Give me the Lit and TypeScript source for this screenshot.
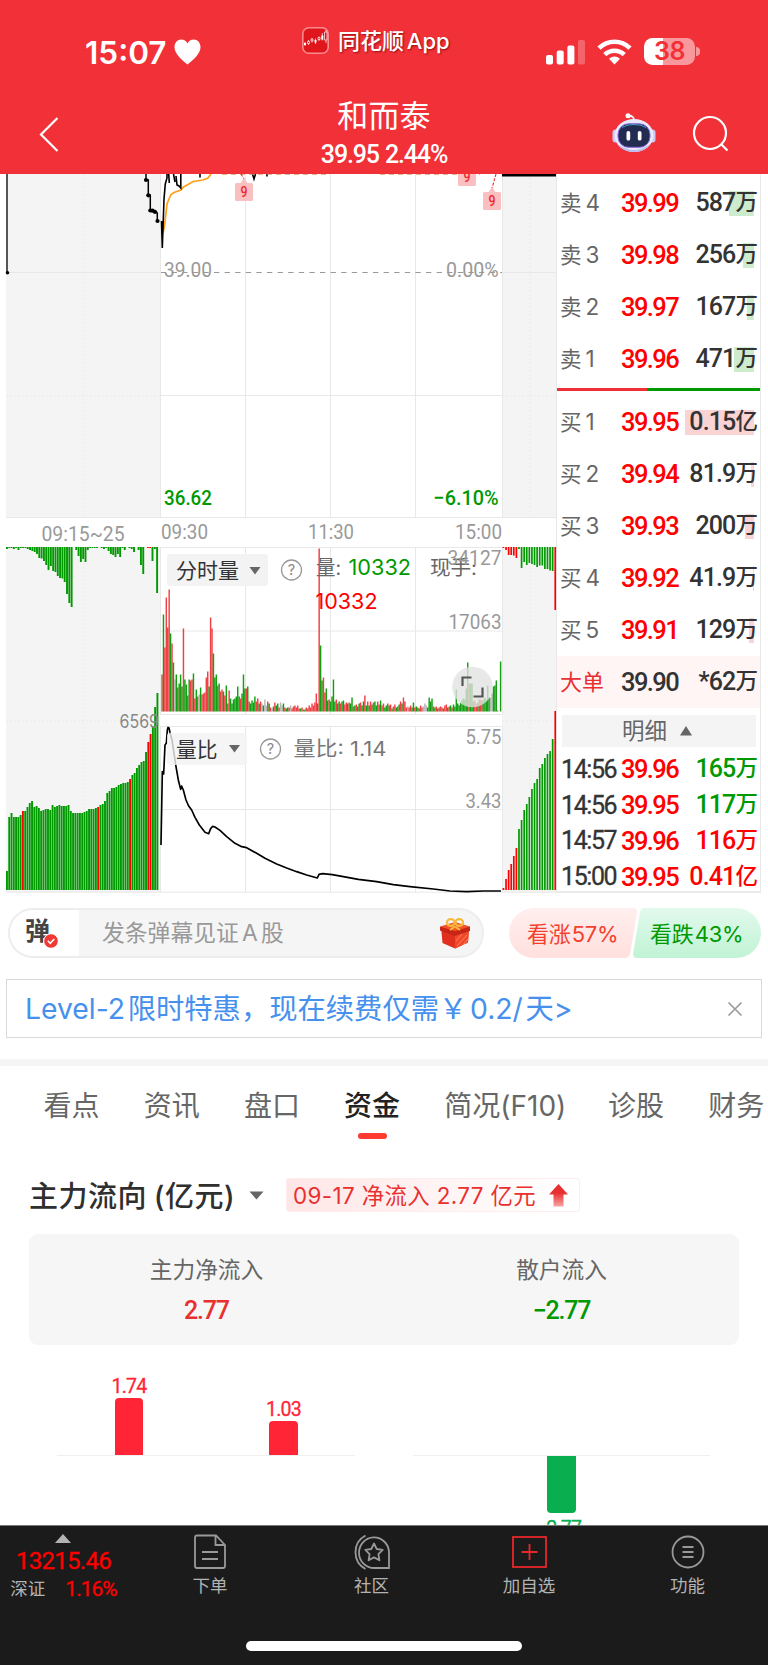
import { LitElement, html, svg, css } from "lit";
import { customElement } from "lit/decorators.js";

const GREEN = "#009900";
const RED = "#ff0000";

/* Bars are written as height plus an optional colour letter: r red, x grey, none green. */
function bars(src: string, x0: number, pitch: number, w: number, base: number, up: boolean, red = RED, op = 1) {
  return src.trim().split(/\s+/).map((t, i) => {
    const h = parseFloat(t);
    const fill = t.endsWith("r") ? red : t.endsWith("x") ? "#b0b0b0" : GREEN;
    return svg`<rect x=${x0 + i * pitch} y=${up ? base - h : base} width=${w} height=${h} fill=${fill} opacity=${op}></rect>`;
  });
}

const AUCTION_TOP = `2 1 1 2 1 3 1 1 1 2 3 4 5 7 11 11.5 14 18 23 19 24 25 29 31 31.5 35 47 56 60 0 3 9 15 12 15 3 1 1 1 1 0 1 2 1 4 7 8 10 7 10 1 3 0 1 2 5 0 3 18 27 0 1r 1r 14 2 46`;
const AUCTION_LOW = `19 73 77 73 73 73 75 79r 79 83 87 89 83 84 82 79 80 81 81 80 85 83 84 85 84 84 84 85 79 77 77 77 77 77 78 79 81 81 81 82 83r 85 86 89 97 99 102 102 103 105 106 107 107 108 111r 115 117 122 125 128 129 138 148r 156r 164 183 197`;
const CLOSE_TOP = `1r 3r 8r 8r 8.5r 11r 2 21 15 18 16 17 18 20 18.5 18.5 22 22 23.5 24 63r`;
const CLOSE_LOW = `2r 11r 20r 26r 34r 42r 61 70 80 86 93 101 107 111 122 126 132 136 139 151 179r`;
const VOLUME = `37r 97 64r 114r 84r 122r 78 68r 49 32x 37 24r 28 37 25 83r 32 27 16r 32 31r 32r 38 13r 22 15r 17x 24 17r 18r 19r 34r 40r 25 94r 83r 58 34 37 26r 28 20r 22r 20 16r 26 8r 21r 13 8 12 13 15 25 15 13r 18 37 23 23r 25 10r 8 11 9 15 10r 13r 8 10r 8x 6 12x 6x 10r 8 4r 3x 5 9r 6 8 4r 9x 6x 8 4r 3 4 4r 6x 3r 5r 6r 4r 6r 3r 3 4r 2r 2 4r 3r 6r 4r 8r 6r 9r 18r 8 163r 66 31 34r 19r 23 11 12r 10 15 32 10 12r 8 10 8r 10 11 7r 9r 8 9r 8 14 5r 6 7r 5 8 9r 6 10 16r 6 10r 6 10r 7 9r 10 6 10r 7r 11 6r 8r 4 6 8r 6 7r 3 5r 7r 4 5r 7 10r 8 14r 10r 4r 5x 4r 6r 4 9 4r 5 4r 3 6r 4r 5x 8x 6x 4 14 10 13 5r 4 5r 3 4r 5r 4r 3 6r 7r 4 5r 6 4r 7 5 22 8 6 9 11 13 12 23 49 28r 28 28 10 11r 8r 9r 12 12r 11 12r 14 12 26 14 14x 18x 25 26 31 1r 0 50`;

const RATIO = "33,435 37,215 41,222 45,135 49,130 52,90 54,82 57,84 60,98 66,120 72,160 78,200 85,240 92,268 95,258 100,270 108,300 116,318 125,330 135,352 148,375 165,397 176,401 182,386 188,379 195,381 210,391 230,410 255,430 275,440 290,443 320,460 345,475 380,492 410,504 440,515 470,525 502,534 507,523 518,521 547,524 580,530 625,538 680,545 730,554 780,560 850,567 900,573 950,575 1000,573 1053,573";

const label = (x: number, y: number, w: number, text: string, fill = "#999", size = 21, cls = "din") =>
  svg`<text class=${cls} x=${x} y=${y} fill=${fill} font-size=${size} textLength=${w} lengthAdjust="spacingAndGlyphs">${text}</text>`;

@customElement("stock-chart")
export class StockChart extends LitElement {
  static styles = css`
    :host { display: block; }
    svg { display: block; }
    .din { font-family: Roboto, sans-serif; }
    .bold { font-family: Roboto, sans-serif; font-weight: 500; }
    .ui { font-family: Inter, "Noto Sans CJK SC", sans-serif; }
    .help { fill: none; stroke: #999; stroke-width: 1.3; }
    .grid { stroke: #e8e8e8; stroke-width: 1; fill: none; }
    .dots { stroke: #ebebeb; stroke-width: 1; stroke-dasharray: 2 2; fill: none; }
  `;

  private nine(x: number, y: number) {
    return svg`<g fill="#f9bfc1"><rect x=${x} y=${y} width="18" height="18" rx="1.5"></rect>
      <path d=${`M${x + 5} ${y + 1}L${x + 9} ${y - 5}L${x + 13} ${y + 1}Z`}></path></g>
      ${label(x + 5.6, y + 14, 7, "9", "#f0282d", 14, "bold")}`;
  }

  private help(x: number, y: number) {
    return svg`<circle class="help" cx=${x} cy=${y} r="10"></circle>
      <text class="ui" x=${x} y=${y + 5.3} text-anchor="middle" fill="#888" font-size="14.5">?</text>`;
  }

  render() {
    return html`<svg width="557" height="719" viewBox="0 174 557 719">
      <rect x="6" y="174" width="154" height="343.5" fill="#f4f4f4"></rect>
      <rect x="502" y="174" width="55" height="343.5" fill="#f4f4f4"></rect>
      <rect x="6" y="547" width="154" height="345" fill="#f4f4f4"></rect>
      <rect x="502" y="547" width="55" height="345" fill="#f4f4f4"></rect>
      <path class="dots" d="M84 174V517M6 396H160M502 396H557M530 174V517M84 547V892M6 721H160M530 547V892M502 721H557"></path>
      <path class="grid" d="M160.5 174V517.5M245.5 174V517.5M330.5 174V517.5M415.5 174V517.5M502.5 174V517.5
        M160 395.5H502M6 517.5H557M6 272.5H160M502 272.5H557
        M160 547.5H502M160.5 547V714.5M245.5 547V714.5M330.5 547V714.5M415.5 547V714.5M502.5 547V714.5M160 631H502M160 714.5H502
        M160 726.5H502M160.5 726V892M245.5 726V892M330.5 726V892M415.5 726V892M502.5 726V892M160 809.5H502M6 892.2H557M556.5 174V893"></path>

      <path d="M7 174V273" stroke="#000" stroke-width="1.3"></path><circle cx="7.5" cy="272.7" r="1.8"></circle>
      <path d="M146 174V180H148.3V195H150.3V210.5H155L157.3 213V221" fill="none" stroke="#000" stroke-width="1.5"></path>
      ${[[146, 180], [148.3, 195.3], [150.3, 210.5], [152.5, 210.7], [155, 212], [157.5, 221]].map(([x, y]) => svg`<circle cx=${x} cy=${y} r="2.1"></circle>`)}
      <path d="M162 221L163 233L164.5 226L167 204L169 199L171 194.5L174 192.5L181 190L183.500 187L188 184.500L193 181.500L203 180L208 178L211 174" fill="none" stroke="#ff9f1a" stroke-width="1.7"></path>
      <path d="M161.500 221L162.300 248L164 199L165.300 184L167 178V174M168.700 174L169.300 183M173.500 174L175 182M176 176L177 185L179 186L180.800 188V174M200 174V177.500M252.500 174L254 179L255.500 174M267 174V176.500" fill="none" stroke="#000" stroke-width="1.6"></path>
      <path d="M222 174.300H330M380 174.300H480" stroke="#d98a4a" stroke-width="0.800" stroke-dasharray="5 4"></path>
      <path d="M241 174L244 179M496 174L491.500 190" stroke="#f0282d" stroke-width="1.1" stroke-dasharray="3 1.500"></path>
      ${this.nine(235, 183)}${this.nine(458, 168)}${this.nine(483, 192)}
      <rect x="502" y="174" width="54" height="2.500"></rect>

      ${label(164, 277, 48, "39.00")}
      ${label(446, 277, 52.5, "0.00%")}
      <path d="M161 272.500H502" stroke="#999" stroke-width="1.2" stroke-dasharray="5.300 5.300"></path>
      ${label(164, 505, 48, "36.62", GREEN, 21, "bold")}
      ${label(433.5, 505, 65, "−6.10%", GREEN, 21, "bold")}
      ${label(41.5, 540.5, 83, "09:15~25")}
      ${label(161, 539, 47, "09:30")}
      ${label(308, 539, 46, "11:30")}
      ${label(455, 539, 47, "15:00")}

      ${bars(AUCTION_TOP, 6, 2.31, 1.9, 547, false)}
      ${bars(AUCTION_LOW, 6, 2.28, 1.9, 890, true)}
      ${bars(CLOSE_TOP, 502.6, 2.59, 1.7, 547, false)}
      ${bars(CLOSE_LOW, 502.6, 2.59, 1.7, 890, true)}
      ${bars(VOLUME, 161.3, 340 / VOLUME.trim().split(/\s+/).length, 1.45, 711.500, true, "#ee3337", 0.93)}
      ${label(119.5, 727.5, 39.5, "6569", "#888", 18, "ui")}

      <g transform="translate(150 700) scale(0.33333)"><polyline points=${RATIO} fill="none" stroke="#000" stroke-width="5" stroke-linejoin="round"></polyline></g>

      <rect x="167" y="554" width="101" height="32" rx="3" fill="#f2f2f2" opacity="0.94"></rect>
      ${label(176, 578, 63, "分时量", "#333", 21, "ui")}
      <path d="M249.500 567H260.500L255 574.500Z" fill="#666"></path>
      ${this.help(291.5, 570)}
      ${label(316, 574.500, 25, "量:", "#666", 20, "ui")}
      ${label(348.500, 575, 62.500, "10332", GREEN, 21, "ui")}
      ${label(430, 574.500, 47, "现手:", "#666", 20, "ui")}
      ${label(315.500, 608.500, 62, "10332", RED, 21, "ui")}
      ${label(447.500, 565, 54, "34127")}
      ${label(448.500, 629, 53, "17063")}

      <rect x="167" y="733" width="80" height="32" rx="3" fill="#f2f2f2" opacity="0.8"></rect>
      ${label(176, 757, 41.500, "量比", "#333", 21, "ui")}
      <path d="M229 745H240L234.500 752.500Z" fill="#666"></path>
      ${this.help(270.5, 749)}
      ${label(293.500, 756, 93, "量比: 1.14", "#777", 20, "ui")}
      ${label(465.500, 744, 36, "5.75")}
      ${label(465.500, 808, 36, "3.43")}

      <circle cx="472.500" cy="687" r="20.300" fill="#e2e2e2" opacity="0.78"></circle>
      <path d="M462.500 686V677.500H471.500M482.500 687.500V696.500H473.500" fill="none" stroke="#555" stroke-width="2.200"></path>
    </svg>`;
  }
}

@customElement("order-book")
export class OrderBook extends LitElement {
  static styles = css`
    :host { display: block; box-sizing: border-box; height: 719px; padding-top: 3px; border-right: 1px solid #eaeaea; border-bottom: 2px solid #ebebeb; font-family: Inter, "Noto Sans CJK SC", sans-serif; overflow: hidden; }
    .row { display: grid; grid-template-columns: 61px 62px 1fr; align-items: center; height: 52px; padding: 0 3px 0 3px; color: #333; white-space: nowrap; }
    .side { display: flex; align-items: center; gap: 4px; font-size: 22.500px; color: #666; line-height: 30px; }
    .side .cn { font-size: 21.500px; padding-bottom: 1px; }
    .num { font-family: Roboto, "Noto Sans CJK SC", sans-serif; font-weight: 500; font-size: 25.500px; letter-spacing: -1.600px; line-height: 30px; }
    .red { color: #f00; }
    .green { color: #090; }
    .vol { justify-self: end; display: grid; align-items: center; justify-items: end; font-family: Roboto, "Noto Sans CJK SC", sans-serif; font-weight: 500; font-size: 25px; letter-spacing: -0.85px; line-height: 30px; }
    .vol > * { grid-area: 1 / 1; }
    .depth { height: 25px; margin-right: 3px; }
    .depth.sell { background: #cdebcd; }
    .depth.buy { background: #fad3d5; }
    .cnu { display: inline-block; font-size: 22.500px; letter-spacing: -1px; line-height: 24px; font-weight: 500; transform: translateY(-1.500px); }
    .split { display: grid; grid-template-columns: 90px 1fr; height: 3px; margin: 3px 0 5px; }
    .split .l { background: #f03036; }
    .split .r { background: #090; }
    .big { background: #fff5f5; }
    .big .side { color: #e93030; font-size: 22px; }
    .toggle { display: flex; align-items: center; justify-content: center; gap: 13px; height: 32px; margin: 7px 4px 5px 5px; padding-right: 4px; background: #f4f4f4; color: #666; font-size: 22.500px; line-height: 32px; }
    .toggle span { padding-bottom: 1px; }
    .trade { height: 35.800px; padding-left: 4px; grid-template-columns: 60px 62px 1fr; }
    .trade > * { padding-bottom: 1px; }
    .trade .time { font-family: Roboto, sans-serif; font-weight: 400; -webkit-text-stroke: 0.3px; font-size: 25px; letter-spacing: -1.4px; }
  `;

  private amount(v: string, tone = "", depth = 0, kind = "") {
    return html`<span class="vol ${tone}">${depth ? html`<i class="depth ${kind}" style="width:${depth}px"></i>` : null}<span>${v.slice(0, -1)}<span class="cnu">${v.slice(-1)}</span></span></span>`;
  }
  private level(cn: string, n: string, price: string, v: string, depth: number, kind: string) {
    return html`<div class="row"><span class="side"><span class="cn">${cn}</span>${n}</span><span class="num red">${price}</span>${this.amount(v, "", depth, kind)}</div>`;
  }

  render() {
    const sells: [string, string, string, number][] = [["4", "39.99", "587万", 25], ["3", "39.98", "256万", 11], ["2", "39.97", "167万", 7], ["1", "39.96", "471万", 20]];
    const buys: [string, string, string, number][] = [["1", "39.95", "0.15亿", 69], ["2", "39.94", "81.9万", 3], ["3", "39.93", "200万", 9], ["4", "39.92", "41.9万", 1.5], ["5", "39.91", "129万", 5]];
    const trades = [["14:56", "39.96", "165万", "green"], ["14:56", "39.95", "117万", "green"], ["14:57", "39.96", "116万", "red"], ["15:00", "39.95", "0.41亿", "red"]];
    return html`
      ${sells.map(([n, p, v, d]) => this.level("卖", n, p, v, d, "sell"))}
      <div class="split"><span class="l"></span><span class="r"></span></div>
      ${buys.map(([n, p, v, d]) => this.level("买", n, p, v, d, "buy"))}
      <div class="row big"><span class="side">大单</span><span class="num">39.90</span>${this.amount("*62万")}</div>
      <div class="toggle"><span>明细</span><svg width="12" height="10"><path d="M0 9.500L6 0L12 9.500Z" fill="#666"></path></svg></div>
      ${trades.map(([t, p, v, c]) => html`<div class="row trade"><span class="time">${t}</span><span class="num red">${p}</span>${this.amount(v, c)}</div>`)}
    `;
  }
}

@customElement("app-root")
export class AppRoot extends LitElement {
  static styles = css`
    :host { display: flex; flex-direction: column; width: 768px; height: 1665px; overflow: hidden; background: #fff; font-family: Inter, "Noto Sans CJK SC", sans-serif; color: #333; }
    * { box-sizing: border-box; }
    svg { display: block; flex: none; }
    header { flex: none; height: 174px; background: #f23038; color: #fff; }
    .status { display: grid; grid-template-columns: 302px 1fr auto; height: 92px; padding-right: 68px; }
    .clock { display: flex; align-items: center; gap: 7px; padding: 12px 0 0 85px; font-size: 31.500px; font-weight: 600; }
    .source { display: flex; align-items: center; gap: 9px; height: 81px; font-size: 22px; font-weight: 500; word-spacing: -3px; text-shadow: 1px 1px 2px rgba(90, 0, 0, 0.65); }
    .source span { padding-bottom: 4px; }
    .system { display: flex; align-items: center; gap: 12px; padding-top: 11px; }
    .battery { display: flex; align-items: center; gap: 1px; }
    .cell { width: 51px; height: 27px; border-radius: 8.500px; background: linear-gradient(90deg, #fff 38%, #f9989c 38%); color: #f23038; font-size: 25px; line-height: 27px; font-weight: 600; text-align: center; letter-spacing: -0.5px; }
    .nub { width: 4px; height: 9px; border-radius: 0 4px 4px 0; background: #f9989c; }
    .nav { display: grid; grid-template-columns: 160px 1fr 160px; height: 82px; }
    .back { padding: 25px 0 0 39px; }
    .heading { text-align: center; }
    .name { font-size: 31px; line-height: 36px; padding-top: 6px; letter-spacing: 0.2px; }
    .quote { font-family: Roboto, sans-serif; font-size: 25px; font-weight: 500; line-height: 28px; letter-spacing: -1.150px; word-spacing: 1px; padding-top: 7px; }
    .tools { display: flex; gap: 36px; padding: 21px 0 0 4px; }
    .market { flex: none; display: grid; grid-template-columns: 557px 204px; height: 719px; }
    .social { flex: none; display: flex; align-items: center; height: 50px; margin: 15px 7px 0 8px; }
    .compose { display: flex; align-items: center; width: 476px; height: 50px; border: 2px solid #ededed; border-radius: 25px; background: #f5f5f5; overflow: hidden; }
    .danmu { display: flex; position: relative; width: 69px; height: 46px; padding: 3px 0 0 15px; background: #fff; font-size: 25px; line-height: 36px; font-weight: 700; color: #444; }
    .tick { position: absolute; left: 33px; top: 23px; }
    .hint { flex: 1; padding: 0 0 4px 23px; color: #999; font-size: 22.800px; word-spacing: -3.200px; }
    .compose .gift { margin-right: 11px; }
    .votes { display: flex; margin-left: 25px; }
    .vote { display: flex; align-items: center; height: 50px; font-size: 22px; letter-spacing: -0.3px; word-spacing: -4.500px; padding-bottom: 3px; }
    .up { width: 128px; padding-left: 18px; color: #f6402e; background: linear-gradient(#ffefee, #ffe0de); clip-path: path("M25 0H124Q129 0 128 5L121 46Q120 50 116 50H25A25 25 0 0 1 25 0Z"); }
    .down { width: 128px; margin-left: -4px; padding-left: 17px; color: #090; background: linear-gradient(#e2f9ec, #c0f3d5); clip-path: path("M12 0H103A25 25 0 0 1 103 50H4Q0 50 0 46L7 4Q8 0 12 0Z"); }
    .promo { flex: none; display: flex; align-items: center; justify-content: space-between; height: 59px; margin: 21px 6px 0; padding: 0 18px; border: 1px solid #d9d9d9; color: #4690ee; font-size: 28.300px; }
    .promo span { word-spacing: -5.200px; padding-bottom: 4px; }
    .strip { flex: none; height: 7px; margin-top: 21px; background: #f5f5f5; }
    .tabs { flex: none; display: flex; gap: 44.200px; height: 80px; padding: 18px 0 0 43.500px; font-size: 28px; color: #666; white-space: nowrap; overflow: hidden; }
    .tab { display: flex; flex-direction: column; align-items: center; line-height: 44px; }
    .tab:nth-child(5) { margin-right: -2.500px; }
    .tab.on { color: #222; font-weight: 500; }
    .tab.on::after { content: ""; width: 29px; height: 6px; margin-top: 5px; border-radius: 3px; background: #ff3b30; }
    .flow { flex: none; display: flex; align-items: center; height: 34px; margin: 32px 0 0 29px; }
    .flow .title { width: 207px; padding-bottom: 2px; font-size: 29px; letter-spacing: 0.5px; word-spacing: -1.500px; font-weight: 500; white-space: nowrap; color: #2f2f2f; }
    .flow .caret { margin: 0 22px 0 13px; }
    .badge { display: flex; align-items: center; gap: 13px; width: 294px; height: 34px; padding-left: 6px; border: 1px solid #ffecec; border-radius: 3px; background: linear-gradient(90deg, #ffe6e6, #fff 95%); color: #e93030; font-size: 22.400px; letter-spacing: 0.38px; white-space: nowrap; }
    .badge span { padding-bottom: 3px; }
    .card { flex: none; display: grid; grid-template-columns: 1fr 1fr; height: 111px; margin: 22px 29px 0; border-radius: 9px; background: #f6f6f6; text-align: center; }
    .cap { padding-top: 20px; font-size: 22.700px; line-height: 32px; color: #666; }
    .val { padding-top: 10px; font-family: Roboto, sans-serif; font-size: 25px; line-height: 30px; font-weight: 500; letter-spacing: -1.2px; }
    .red { color: #e93030; } .green { color: #090; }
    .columns { flex: none; display: grid; grid-template-columns: 298px 297px; gap: 58px; height: 180px; margin-left: 57px; overflow: hidden; }
    .plot { display: grid; grid-template-rows: 110.500px 1fr; }
    .above { display: grid; grid-template-columns: 1fr 1fr; align-items: end; border-bottom: 1px solid #efefef; }
    .item { display: flex; flex-direction: column; align-items: center; font-family: Roboto, sans-serif; font-size: 19.500px; line-height: 24px; letter-spacing: -0.8px; color: #ff2536; -webkit-text-stroke: 0.3px; }
    .item.left { margin-right: 5px; }
    .item.right { margin-left: 6px; }
    .bar { width: 28.500px; margin-top: -1px; border-radius: 4px 4px 0 0; background: #ff2536; }
    .item.neg { color: #09ae4f; line-height: 32px; }
    .neg .bar { margin-top: 0; border-radius: 0 0 4px 4px; background: #09ae4f; }
    footer { flex: none; height: 140px; background: #1b1b1b; border-top: 1px solid #777; color: #b3b3b3; font-size: 17.500px; }
    .dock { display: flex; height: 115px; }
    .index { display: flex; flex-direction: column; align-items: center; width: 127px; padding: 8px 0 0 0; }
    .index .more { margin-right: 1px; }
    .points { font-family: Roboto, sans-serif; color: #f00; -webkit-text-stroke: 0.3px; font-size: 24px; letter-spacing: -0.7px; line-height: 28px; padding-top: 4px; }
    .line { display: flex; gap: 20px; align-items: center; line-height: 26px; padding-top: 1px; }
    .pct { font-family: Roboto, sans-serif; color: #f00; -webkit-text-stroke: 0.3px; font-size: 21px; letter-spacing: -1px; }
    .entries { flex: 1; display: grid; grid-template-columns: 166px 157px 158px 159px; }
    .entry { display: flex; flex-direction: column; align-items: center; gap: 3px; padding-top: 8px; line-height: 26px; }
    .home { width: 276px; height: 10px; margin: 0 auto; border-radius: 5px; background: #fff; }
  `;

  render() {
    const tabs = ["看点", "资讯", "盘口", "资金", "简况(F10)", "诊股", "财务"];
    return html`
      <header>
        <div class="status">
          <div class="clock">15:07<svg width="27" height="26" viewBox="0 0 27 26"><path d="M13.500 25.500C7 20.500 0.500 14.500 0.500 8C0.500 3.500 3.500 0.500 7.300 0.500C10 0.500 12.300 2 13.500 4.500C14.700 2 17 0.500 19.700 0.500C23.500 0.500 26.500 3.500 26.500 8C26.500 14.500 20 20.500 13.500 25.500Z" fill="#fff"></path></svg></div>
          <div class="source"><svg width="27" height="27" viewBox="0 0 27 27"><rect x="0.800" y="0.800" width="25.400" height="25.400" rx="6" fill="#e0161d" stroke="#fa8a8e" stroke-width="1.600"></rect><path d="M3 15V19M6.500 13V18M10 11V15.500M13.500 11.500V17M17 9.500V14M20.300 6V13.500M24 3V16" stroke="#fff" stroke-width="0.700"></path><path d="M2 16h2v2h-2zM12.500 13h2v2.500h-2zM19.300 8.500h2v4h-2z" fill="#fff"></path><path d="M5.500 14.500h2v2h-2zM9 12h2v2h-2zM16 10.500h2v2h-2zM22.500 5h2.500v8h-2.500z" fill="#e0161d" stroke="#fff" stroke-width="0.700"></path></svg><span>同花顺 App</span></div>
          <div class="system">
            <svg width="39" height="26" viewBox="0 0 39 26" fill="#fff"><rect x="0" y="16" width="7" height="9.500" rx="2"></rect><rect x="10.700" y="11.500" width="7" height="14" rx="2"></rect><rect x="21.400" y="6.500" width="7" height="19" rx="2"></rect><rect x="32" y="1" width="7" height="24.500" rx="2" opacity="0.25"></rect></svg>
            <svg width="35" height="26" viewBox="0 0 35 26"><g fill="none" stroke="#fff" stroke-width="4.600"><path d="M2 9.200A22 22 0 0 1 33 9.200"></path><path d="M7.800 15.700A14 14 0 0 1 27.200 15.700"></path></g><path d="M17.500 25.500L12 19.800Q17.500 15.300 23 19.800Z" fill="#fff"></path></svg>
            <div class="battery"><div class="cell">38</div><div class="nub"></div></div>
          </div>
        </div>
        <div class="nav">
          <div class="back"><svg width="20" height="35" viewBox="0 0 20 35"><path d="M18.500 1L2 17.500L18.500 34" fill="none" stroke="#fff" stroke-width="2.200"></path></svg></div>
          <div class="heading"><div class="name">和而泰</div><div class="quote">39.95 2.44%</div></div>
          <div class="tools">
            <svg width="44" height="42" viewBox="0 0 44 42"><path d="M22 8Q22.500 3 16.500 2.500" fill="none" stroke="#f0f1ff" stroke-width="1.800"></path><circle cx="16" cy="2.800" r="2.500" fill="#fff"></circle><rect x="0.500" y="16.500" width="6" height="13" rx="3" fill="#c9c9f3"></rect><rect x="37.500" y="16.500" width="6" height="13" rx="3" fill="#c9c9f3"></rect><ellipse cx="22" cy="22.500" rx="19.500" ry="16.500" fill="#e9eafc"></ellipse><path d="M6 31Q22 43 38 31Q33 39 22 39T6 31Z" fill="#b9bcf0"></path><rect x="6" y="10.800" width="32" height="23.500" rx="10.500" fill="#222c50" stroke="#8a62e0" stroke-width="1"></rect><path d="M10 14.500Q14 11.500 22 11.500T34 14.500" fill="none" stroke="#4bb8d8" stroke-width="0.800"></path><rect x="14.500" y="18" width="3.700" height="9.500" rx="1.850" fill="#fff"></rect><rect x="25.800" y="18" width="3.700" height="9.500" rx="1.850" fill="#fff"></rect></svg>
            <svg width="38" height="40" viewBox="0 0 38 40"><circle cx="18" cy="20" r="16" fill="none" stroke="#fff" stroke-width="2.200"></circle><path d="M29 31L35.500 37.500" stroke="#fff" stroke-width="2.200"></path></svg>
          </div>
        </div>
      </header>

      <section class="market"><stock-chart></stock-chart><order-book></order-book></section>

      <section class="social">
        <div class="compose">
          <div class="danmu">弹<svg class="tick" width="16" height="16" viewBox="0 0 16 16"><circle cx="8" cy="8" r="7.300" fill="#ee3a33" stroke="#fff" stroke-width="1"></circle><path d="M4.800 7.800L7.200 10.300L11.300 6" fill="none" stroke="#fff" stroke-width="1.600"></path></svg></div>
          <div class="hint">发条弹幕见证 A 股</div>
          <svg class="gift" width="32" height="31" viewBox="0 0 32 31"><path d="M2 9L16 5L30 9L29 24.500L16 30.500L3.500 25Z" fill="#e02f1e"></path><path d="M1 8.500L16 13L31 8.500V13L16 18L1 12.500Z" fill="#c62615"></path><path d="M1 8.500L16 4L31 8.500L16 13Z" fill="#f2552c"></path><path d="M16 18L29.700 13.500L29 24.500L16 30.500Z" fill="#f0482a"></path><path d="M18 28L28 17M17 23L23 16M24 27L29 21" stroke="#ff8356" stroke-width="1"></path><path d="M16 8.500L11 12M16 8.500L21 12" stroke="#f5b83a" stroke-width="2"></path><g fill="none" stroke="#f7b93c" stroke-width="2.200"><ellipse cx="11.800" cy="4.500" rx="3.800" ry="3.300"></ellipse><ellipse cx="20.200" cy="4.500" rx="3.800" ry="3.300"></ellipse></g></svg>
        </div>
        <div class="votes"><div class="vote up">看涨 57%</div><div class="vote down">看跌 43%</div></div>
      </section>

      <section class="promo"><span>Level-2 限时特惠，现在续费仅需￥ 0.2/ 天&gt;</span><svg width="16" height="16"><path d="M1.500 1.500L14.500 14.500M14.500 1.500L1.500 14.500" stroke="#999" stroke-width="1.600"></path></svg></section>
      <div class="strip"></div>

      <nav class="tabs">${tabs.map((t) => html`<div class="tab ${t === "资金" ? "on" : ""}">${t}</div>`)}</nav>

      <section class="flow">
        <span class="title">主力流向 (亿元)</span>
        <svg class="caret" width="15" height="9"><path d="M0.500 0.500H14.500L7.500 8.500Z" fill="#666"></path></svg>
        <div class="badge"><span>09-17 净流入 2.77 亿元</span><svg width="19" height="23" viewBox="0 0 19 23"><defs><linearGradient id="fade" x1="0" y1="0" x2="0" y2="1"><stop offset="0.400" stop-color="#e93030"></stop><stop offset="1" stop-color="#f9a5a5"></stop></linearGradient></defs><path d="M9.500 0L19 10.500H14.500V22.500H4.500V10.500H0Z" fill="url(#fade)"></path></svg></div>
      </section>

      <section class="card">
        <div><div class="cap">主力净流入</div><div class="val red">2.77</div></div>
        <div><div class="cap">散户流入</div><div class="val green">−2.77</div></div>
      </section>

      <section class="columns">
        <div class="plot"><div class="above">
          <div class="item left">1.74<div class="bar" style="height:57px"></div></div>
          <div class="item right">1.03<div class="bar" style="height:33.500px"></div></div>
        </div></div>
        <div class="plot"><div class="above"></div><div class="item neg"><div class="bar" style="height:57px"></div>-2.77</div></div>
      </section>

      <footer>
        <div class="dock">
          <div class="index"><svg class="more" width="16" height="9"><path d="M0 9L8 0L16 9Z" fill="#b3b3b3"></path></svg><div class="points">13215.46</div><div class="line"><span>深证</span><span class="pct">1.16%</span></div></div>
          <div class="entries">
            <div class="entry"><svg width="32" height="36" viewBox="0 0 32 36" fill="none" stroke="#999" stroke-width="1.800"><path d="M3 1.500H22L31 11V32Q31 34 29 34H3Q1 34 1 32V3.500Q1 1.500 3 1.500ZM21.500 2V11H30.500M8 18H24M8 25H24"></path></svg>下单</div>
            <div class="entry"><svg width="37" height="36" viewBox="0 0 37 36" fill="none" stroke="#999" stroke-width="1.800"><path d="M36 34H21A15 15.300 0 1 1 36 18ZM12.500 1.500A19 19 0 0 0 12.500 35"></path><path d="M21 9.500L23.700 15L29.700 15.900L25.400 20.200L26.400 26.300L21 23.400L15.600 26.300L16.600 20.200L12.300 15.900L18.300 15Z" stroke-linejoin="round"></path></svg>社区</div>
            <div class="entry"><svg width="35" height="36" viewBox="0 0 35 36" fill="none" stroke="#e8262b" stroke-width="1.800"><rect x="1" y="3" width="33" height="30"></rect><path d="M9.500 18H25.500M17.500 10V26"></path></svg>加自选</div>
            <div class="entry"><svg width="34" height="36" viewBox="0 0 34 36" fill="none" stroke="#999" stroke-width="1.800"><circle cx="17" cy="18" r="15.500"></circle><path d="M11.500 13H22.500M11.500 18H22.500M11.500 23H22.500"></path></svg>功能</div>
          </div>
        </div>
        <div class="home"></div>
      </footer>
    `;
  }
}
